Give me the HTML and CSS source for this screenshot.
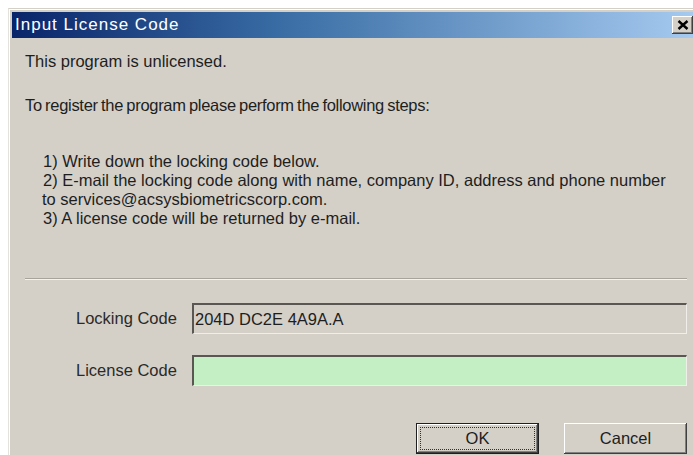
FILE: index.html
```html
<!DOCTYPE html>
<html lang="en">
<head>
<meta charset="utf-8">
<title>Input License Code</title>
<link rel="stylesheet" href="styles.css">
</head>
<body>
<div class="dialog">
  <div class="titlebar">
    <span class="title">Input License Code</span>
    <span class="close-btn">
      <svg width="12" height="10" viewBox="0 0 12 10" aria-hidden="true">
        <path d="M1.5 1 L10.5 9 M10.5 1 L1.5 9" stroke="#000" stroke-width="2.4" fill="none"/>
      </svg>
    </span>
  </div>
  <div class="content">
    <p class="status">This program is unlicensed.</p>
    <p class="intro">To register the program please perform the following steps:</p>
    <div class="steps">
      <div>1) Write down the locking code below.</div>
      <div>2) E-mail the locking code along with name, company ID, address and phone number</div>
      <div class="cont">to services@acsysbiometricscorp.com.</div>
      <div>3) A license code will be returned by e-mail.</div>
    </div>
    <div class="separator"></div>
    <div class="fields">
      <label class="field-label">Locking Code</label>
      <div class="field readonly">204D DC2E 4A9A.A</div>
      <label class="field-label">License Code</label>
      <div class="field editable"></div>
    </div>
    <div class="buttons">
      <button class="btn default"><span class="focus">OK</span></button>
      <button class="btn">Cancel</button>
    </div>
  </div>
</div>
</body>
</html>
```
FILE: styles.css
```css
html, body {
  margin: 0;
  padding: 0;
  background: #ffffff;
  overflow: hidden;
}

body {
  width: 693px;
  height: 455px;
  font-family: "Liberation Sans", Arial, sans-serif;
  font-size: 16.5px;
  color: #1e1e1e;
}

.dialog {
  margin: 8px 0 0 8px;
  width: 683px;
  height: 443px;
  padding: 3px 3px 0 3px;
  background: #d4d0c8;
  border-top: 1px solid #d4d0c8;
  border-left: 1px solid #e4e2dc;
  box-shadow: inset 1px 1px 0 #ffffff;
  overflow: hidden;
}

.titlebar {
  height: 26px;
  display: flex;
  align-items: center;
  justify-content: space-between;
  background: linear-gradient(to right, #0a246a 0%, #3a6ea5 40%, #a6caf0 100%);
  color: #ffffff;
}

.title {
  padding-left: 3px;
  font-size: 17px;
  letter-spacing: 1px;
}

.close-btn {
  width: 21px;
  height: 18px;
  margin-right: 2px;
  background: #d4d0c8;
  box-shadow: inset -1px -1px 0 #404040, inset 1px 1px 0 #ffffff, inset -2px -2px 0 #808080;
  display: flex;
  align-items: center;
  justify-content: center;
}

.content {
  padding: 0 8px 0 13px;
}

.status {
  margin: 14px 0 0 0;
  line-height: 19px;
}

.intro {
  margin: 25px 0 0 0;
  line-height: 19px;
  letter-spacing: -0.3px;
  word-spacing: -1px;
}

.steps {
  margin-top: 37px;
  padding-left: 18px;
  line-height: 19px;
}

.steps .cont {
  margin-left: -1px;
}

.separator {
  margin-top: 50px;
  height: 0;
  border-top: 1px solid #a8a49c;
  border-bottom: 1px solid #f4f2ee;
}

.fields {
  margin-top: 23px;
  padding-left: 51px;
  display: grid;
  grid-template-columns: 116px 1fr;
  grid-template-rows: 31px 31px;
  row-gap: 21px;
  align-items: center;
}

.field-label {
  color: #2a2a2a;
}

.field {
  height: 31px;
  box-sizing: border-box;
  border-top: 2px solid #5a5652;
  border-left: 2px solid #5a5652;
  border-right: 1px solid #f0eee8;
  border-bottom: 1px solid #f0eee8;
  padding-left: 1px;
  display: flex;
  align-items: center;
}

.field.readonly {
  background: #d4d0c8;
}

.field.editable {
  background: #c4eec4;
}

.buttons {
  margin-top: 37px;
  display: flex;
  justify-content: flex-end;
  gap: 25px;
}

.btn {
  width: 123px;
  height: 31px;
  font-family: inherit;
  font-size: 16.5px;
  color: #1e1e1e;
  background: #d4d0c8;
  border: none;
  padding: 0;
  box-shadow: inset -1px -1px 0 #404040, inset 1px 1px 0 #ffffff, inset -2px -2px 0 #808080;
}

.btn.default {
  border: 1px solid #202020;
  padding: 3px;
}

.btn .focus {
  display: flex;
  height: 100%;
  align-items: center;
  justify-content: center;
  border: 1px dotted #303030;
  box-sizing: border-box;
}
```
